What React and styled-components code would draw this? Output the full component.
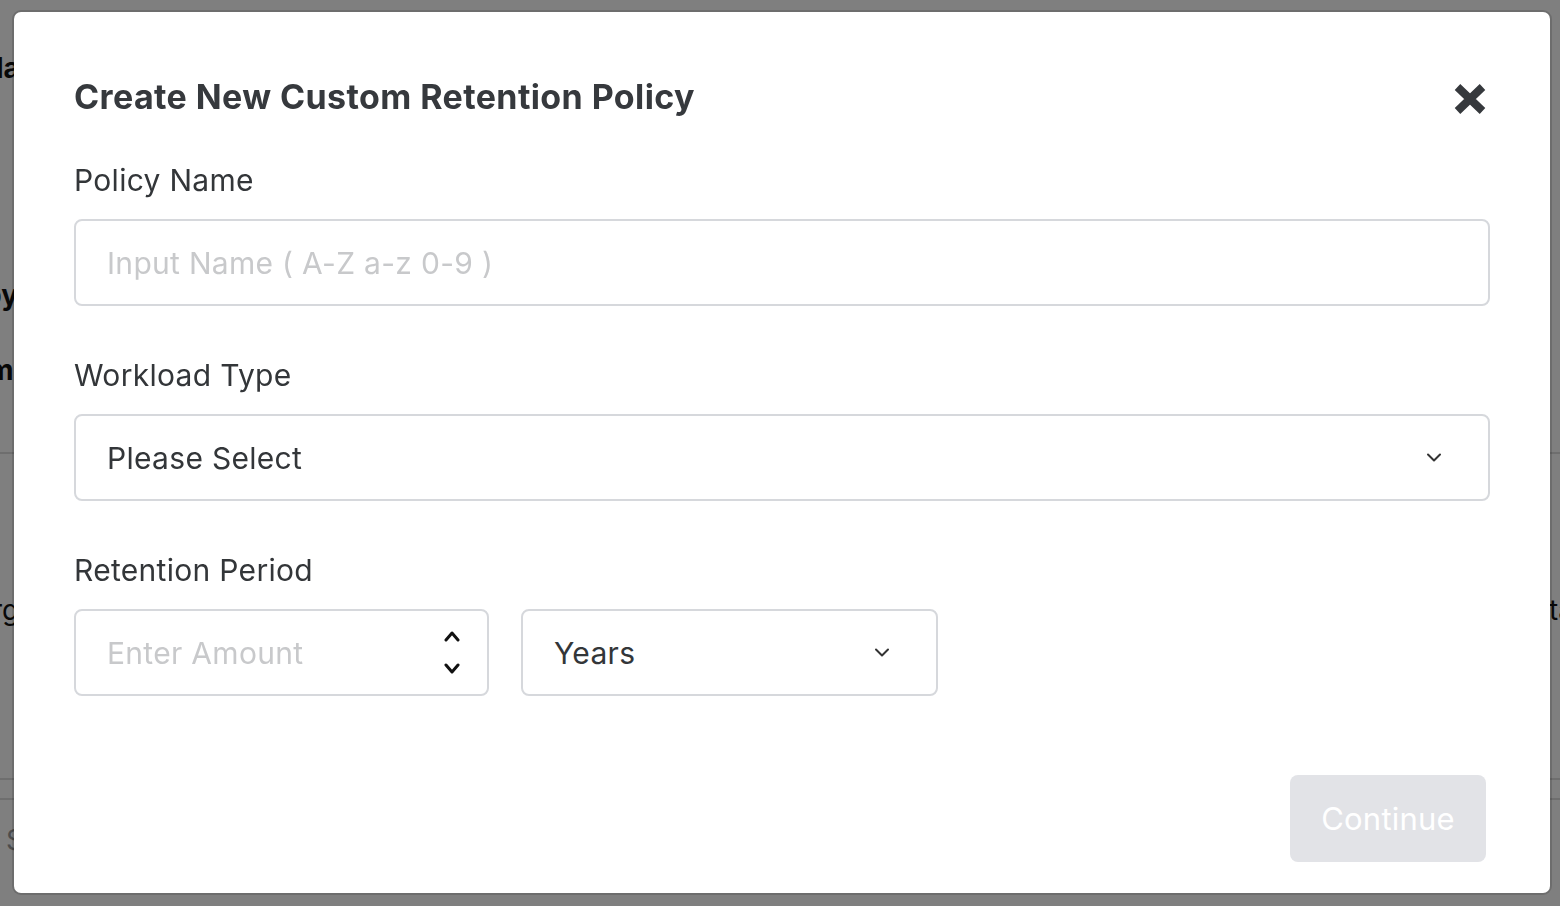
import React from "react";
import styled, { createGlobalStyle } from "styled-components";

const GlobalStyle = createGlobalStyle`
  * { box-sizing: border-box; }
  html, body { margin: 0; padding: 0; height: 100%; }
  body {
    font-family: Inter, "Noto Sans", "Liberation Sans", sans-serif;
    background: #ffffff;
    overflow: hidden;
  }
`;

/* ---------- page behind the dialog ---------- */

const Page = styled.div`
  width: 1560px;
  height: 906px;
  display: flex;
  flex-direction: column;
  color: #111;
`;

const PageRow = styled.div`
  height: ${(p) => p.$h}px;
  display: flex;
  align-items: ${(p) => p.$align || "center"};
  justify-content: space-between;
  border-bottom: ${(p) => (p.$rule ? "2px solid #dcdcdc" : "none")};
  font-size: 28px;
  line-height: 34px;
  font-weight: ${(p) => (p.$bold ? 700 : 400)};
  color: ${(p) => (p.$muted ? "#999" : "#111")};
  white-space: nowrap;
  overflow: hidden;
`;

const PageText = styled.span`
  margin-left: ${(p) => p.$ml || 0}px;
  margin-right: ${(p) => p.$mr || 0}px;
  margin-top: ${(p) => p.$mt || 0}px;
  margin-bottom: ${(p) => p.$mb || 0}px;
`;

/* ---------- dialog ---------- */

const Overlay = styled.div`
  position: fixed;
  inset: 0;
  background: rgba(0, 0, 0, 0.5);
`;

const Dialog = styled.div`
  position: fixed;
  left: 14px;
  top: 12px;
  width: 1536px;
  height: 881px;
  background: #ffffff;
  border-radius: 7px;
  box-shadow: 0 0 0 2px rgba(0, 0, 0, 0.14);
  padding: 65px 60px 31px 60px;
  display: flex;
  flex-direction: column;
`;

const Header = styled.div`
  display: flex;
  align-items: center;
  justify-content: space-between;
  height: 40px;
  margin-bottom: 45px;
`;

const Title = styled.h2`
  margin: 0;
  font-size: 34px;
  line-height: 40px;
  font-weight: 700;
  color: #36393d;
  letter-spacing: 0.4px;
`;

const CloseButton = styled.button`
  border: none;
  background: none;
  padding: 0;
  margin-right: 3px;
  margin-top: 4px;
  display: flex;
  color: #36393d;
  cursor: pointer;
`;

const Field = styled.div`
  display: flex;
  flex-direction: column;
  margin-bottom: 51px;
`;

const Label = styled.label`
  font-size: 30px;
  line-height: 36px;
  letter-spacing: 0.3px;
  color: #333639;
  margin-bottom: 21px;
`;

const Box = styled.div`
  height: 87px;
  width: ${(p) => (p.$w ? `${p.$w}px` : "100%")};
  border: 2px solid #d6d8dc;
  border-radius: 8px;
  display: flex;
  align-items: center;
  justify-content: space-between;
  padding: 0 ${(p) => p.$pr || 44}px 0 31px;
  background: #fff;
`;

const TextInput = styled.input`
  border: none;
  outline: none;
  background: transparent;
  flex: 1;
  min-width: 0;
  font-family: inherit;
  font-size: 30px;
  letter-spacing: 0.3px;
  color: #333;
  padding: 0;
  &::placeholder {
    color: #c8c9cb;
  }
`;

const Value = styled.span`
  font-size: 30px;
  letter-spacing: 0.3px;
  color: #333639;
`;

const PeriodRow = styled.div`
  display: flex;
  gap: 32px;
`;

const Stepper = styled.div`
  display: flex;
  flex-direction: column;
  gap: 21px;
`;

const Footer = styled.div`
  margin-top: auto;
  display: flex;
  justify-content: flex-end;
  padding-right: 4px;
`;

const ContinueButton = styled.button`
  width: 196px;
  height: 87px;
  border: none;
  border-radius: 8px;
  background: #e2e3e7;
  color: #ffffff;
  font-family: inherit;
  font-size: 31px;
  letter-spacing: 0.2px;
  cursor: not-allowed;
`;

const Chevron = ({ up, w = 16, h = 9, sw = 2, color = "#333" }) => (
  <svg width={w} height={h} viewBox={`0 0 ${w} ${h}`} fill="none">
    <path
      d={
        up
          ? `M${sw} ${h - sw / 2 - 0.5} L${w / 2} ${sw / 2 + 0.5} L${w - sw} ${h - sw / 2 - 0.5}`
          : `M${sw} ${sw / 2 + 0.5} L${w / 2} ${h - sw / 2 - 0.5} L${w - sw} ${sw / 2 + 0.5}`
      }
      stroke={color}
      strokeWidth={sw}
      strokeLinecap="round"
      strokeLinejoin="round"
    />
  </svg>
);

// Heavy "x" close mark with flat, square-cut arm ends
const CloseMark = () => (
  <svg width="34" height="32" viewBox="0 0 34 32" fill="none">
    <path
      d="M4.5 4 L29.5 28 M29.5 4 L4.5 28"
      stroke="currentColor"
      strokeWidth="8"
      strokeLinecap="butt"
    />
  </svg>
);

export default function App() {
  return (
    <>
      <GlobalStyle />
      <Page>
        <PageRow $h={100} $bold $align="flex-start">
          <PageText $ml={-4} $mt={51}>lan details</PageText>
        </PageRow>
        <PageRow $h={212} $bold $align="flex-end">
          <PageText $ml={-16}>py</PageText>
        </PageRow>
        <PageRow $h={142} $bold $rule $align="flex-start">
          <PageText $ml={-12} $mt={41}>m</PageText>
        </PageRow>
        <PageRow $h={200} $align="flex-end">
          <PageText $ml={-8} $mb={27}>rg</PageText>
          <PageText $mr={-14} $mb={27}>ta</PageText>
        </PageRow>
        <PageRow $h={126} $rule />
        <PageRow $h={20} $rule />
        <PageRow $h={80} $muted>
          <PageText $ml={6}>S</PageText>
        </PageRow>
      </Page>

      <Overlay />
      <Dialog role="dialog" aria-modal="true">
        <Header>
          <Title>Create New Custom Retention Policy</Title>
          <CloseButton aria-label="Close">
            <CloseMark />
          </CloseButton>
        </Header>

        <Field>
          <Label>Policy Name</Label>
          <Box>
            <TextInput placeholder="Input Name ( A-Z a-z 0-9 )" />
          </Box>
        </Field>

        <Field>
          <Label>Workload Type</Label>
          <Box $pr={46}>
            <Value>Please Select</Value>
            <Chevron />
          </Box>
        </Field>

        <Field>
          <Label>Retention Period</Label>
          <PeriodRow>
            <Box $w={415} $pr={26}>
              <TextInput placeholder="Enter Amount" />
              <Stepper>
                <Chevron up w={18} h={11} sw={3} color="#111" />
                <Chevron w={18} h={11} sw={3} color="#111" />
              </Stepper>
            </Box>
            <Box $w={417} $pr={46}>
              <Value>Years</Value>
              <Chevron />
            </Box>
          </PeriodRow>
        </Field>

        <Footer>
          <ContinueButton disabled>Continue</ContinueButton>
        </Footer>
      </Dialog>
    </>
  );
}
